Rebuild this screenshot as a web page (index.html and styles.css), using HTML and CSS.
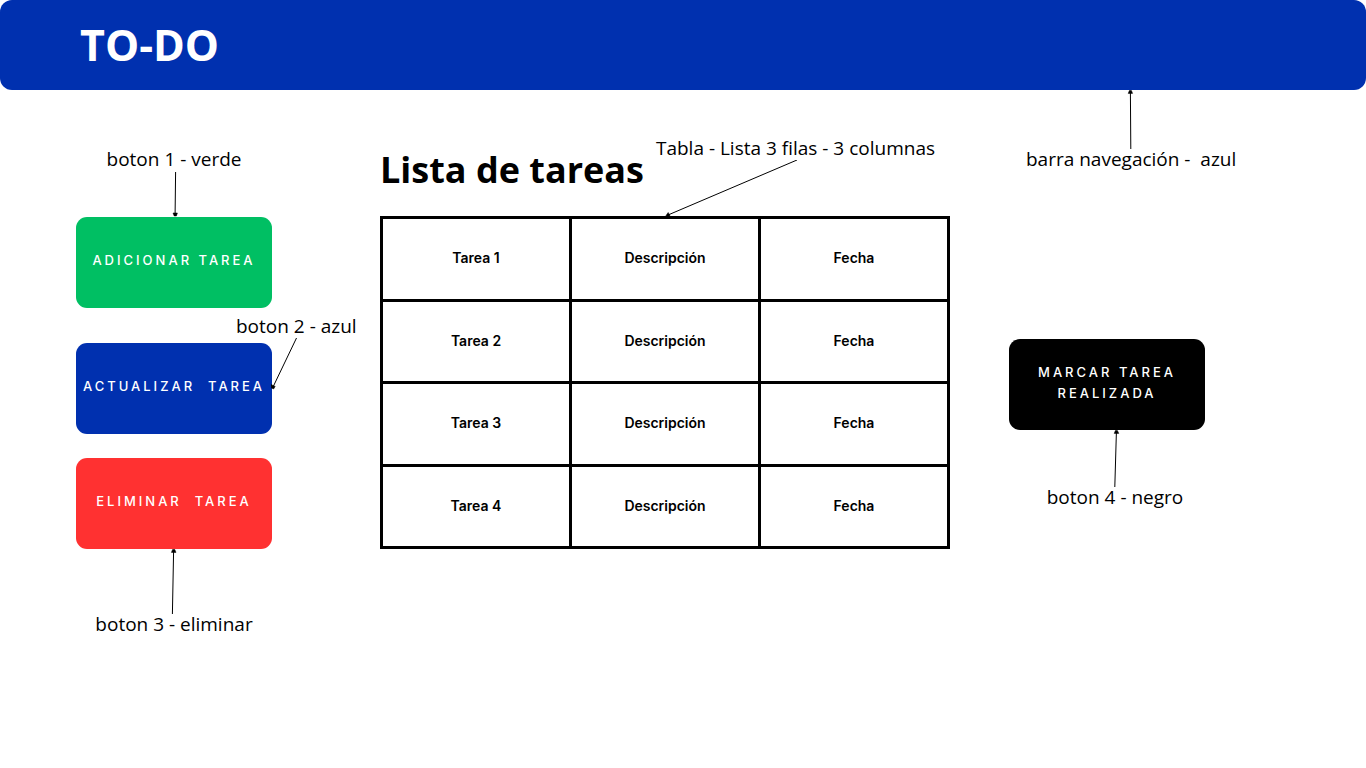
FILE: index.html
```html
<!DOCTYPE html>
<html lang="es">
<head>
<meta charset="utf-8">
<meta name="viewport" content="width=device-width, initial-scale=1">
<title>TO-DO</title>
<link rel="stylesheet" href="styles.css">
</head>
<body>
<header class="navbar">
  <h1 class="brand">TO-DO</h1>
</header>
<main class="board">
  <section class="actions">
    <div class="callout">
      <p class="note">boton 1 - verde</p>
      <svg class="arrow" width="10" height="45" viewBox="0 0 10 45" aria-hidden="true"><path class="line" d="M6.6 0L6.1 42"/><path class="head" d="M4 41H8.4L7.4 44H5.2Z"/></svg>
      <button type="button" class="btn btn-add">ADICIONAR TAREA</button>
    </div>
    <p class="note note-update">boton 2 - azul
      <svg class="arrow-update" width="30" height="54" viewBox="0 0 30 54" aria-hidden="true"><path class="line" d="M25.5 0L2 49"/><path class="head" d="M0 46.5L4.2 48.4L2.6 51L.4 50Z"/></svg>
    </p>
    <button type="button" class="btn btn-update">ACTUALIZAR&nbsp; TAREA</button>
    <div class="callout callout-delete">
      <button type="button" class="btn btn-delete">ELIMINAR&nbsp; TAREA</button>
      <svg class="arrow" width="10" height="66" viewBox="0 0 10 66" aria-hidden="true"><path class="line" d="M4.6 2L3.4 65"/><path class="head" d="M3.6 .5H5.8L7 3.4H2.4Z"/></svg>
      <p class="note">boton 3 - eliminar</p>
    </div>
  </section>

  <section class="tasks">
    <div class="tasks-head">
      <h2 class="title" id="tasks-title">Lista de tareas</h2>
      <p class="note note-table">Tabla - Lista 3 filas - 3 columnas
        <svg class="arrow-table" width="136" height="58" viewBox="0 0 136 58" aria-hidden="true"><path class="line" d="M135 0L6 55"/><path class="head" d="M6.2 52.5L8 56L5 57L4 55.5Z"/></svg>
      </p>
    </div>
    <table class="grid" aria-labelledby="tasks-title">
      <tbody>
        <tr><td>Tarea 1</td><td>Descripción</td><td>Fecha</td></tr>
        <tr><td>Tarea 2</td><td>Descripción</td><td>Fecha</td></tr>
        <tr><td>Tarea 3</td><td>Descripción</td><td>Fecha</td></tr>
        <tr><td>Tarea 4</td><td>Descripción</td><td>Fecha</td></tr>
      </tbody>
    </table>
  </section>

  <section class="done">
    <div class="callout callout-nav">
      <svg class="arrow" width="10" height="59" viewBox="0 0 10 59" aria-hidden="true"><path class="line" d="M4.4 2L4.8 59"/><path class="head" d="M3.4 .5H5.4L6.6 3.4H2.2Z"/></svg>
      <p class="note">barra navegación -&nbsp; azul</p>
    </div>
    <div class="callout callout-done">
      <button type="button" class="btn btn-done">MARCAR TAREA REALIZADA</button>
      <svg class="arrow arrow-done" width="10" height="57" viewBox="0 0 10 57" aria-hidden="true"><path class="line" d="M6.4 2L4.8 57"/><path class="head" d="M5.4 .5H7.4L8.8 3.4H4.2Z"/></svg>
      <p class="note note-done">boton 4 - negro</p>
    </div>
  </section>
</main>
</body>
</html>
```

FILE: styles.css
```css
* {
  box-sizing: border-box;
}

body {
  margin: 0;
  background: #fff;
  color: #000;
  font-family: "Open Sans", "Noto Sans", sans-serif;
}

h1, h2, p {
  margin: 0;
}

.navbar {
  padding: 15px 80px;
  border-radius: 12px;
  background: #0030af;
}

.brand {
  color: #fff;
  font-size: 43px;
  font-weight: 700;
  line-height: 60px;
}

.board {
  display: grid;
  grid-template-columns: 304fr 570fr 340fr;
  padding: 0 76px;
}

.note {
  font-size: 19px;
  line-height: 26px;
  white-space: nowrap;
}

.callout {
  display: flex;
  flex-direction: column;
  align-items: center;
}

.arrow {
  display: block;
}

.line {
  fill: none;
  stroke: #000;
  stroke-width: 1;
}

.head {
  fill: #000;
  stroke: #000;
  stroke-width: 0.5;
}

.btn {
  width: 196px;
  min-height: 91px;
  padding: 0 0 4px;
  border: 0;
  border-radius: 11px;
  color: #fff;
  font-family: Inter, "Liberation Sans", sans-serif;
  font-size: 13px;
  font-weight: 500;
  line-height: 21px;
  letter-spacing: 3px;
  cursor: pointer;
}

.btn-add { background: #00bf63; }
.btn-update { background: #0030af; }
.btn-delete { background: #ff3131; }
.btn-done {
  padding: 0 24px 4px;
  background: #000;
}

.actions {
  display: flex;
  flex-direction: column;
  align-items: flex-start;
  padding-top: 56px;
}

.note-update {
  position: relative;
  margin: 5px 0 4px 160px;
}

.arrow-update {
  position: absolute;
  top: 25px;
  left: 35px;
}

.callout-delete {
  margin-top: 24px;
}

.callout-delete .note {
  margin-top: -4px;
}

.tasks-head {
  display: flex;
  align-items: flex-start;
  justify-content: space-between;
  padding: 45px 15px 21px 0;
}

.title {
  padding-top: 10px;
  font-size: 36px;
  font-weight: 700;
  line-height: 50px;
  white-space: nowrap;
}

.note-table {
  position: relative;
}

.arrow-table {
  position: absolute;
  top: 25px;
  left: 6px;
}

.grid {
  width: 100%;
  height: 333px;
  border-collapse: collapse;
  table-layout: fixed;
  font-family: Inter, "Liberation Sans", sans-serif;
  font-size: 14px;
  font-weight: 600;
  line-height: 20px;
  text-align: center;
}

.grid td {
  padding: 0 0 1px;
  border: 3px solid #000;
}

.done {
  display: flex;
  flex-direction: column;
  align-items: flex-start;
  padding-left: 59px;
}

.callout-nav {
  margin-left: 17px;
}

.callout-nav .note {
  margin-top: -3px;
}

.callout-done {
  margin-top: 167px;
}

.arrow-done,
.note-done {
  margin-left: 16px;
}

.note-done {
  margin-top: -3px;
}
```
